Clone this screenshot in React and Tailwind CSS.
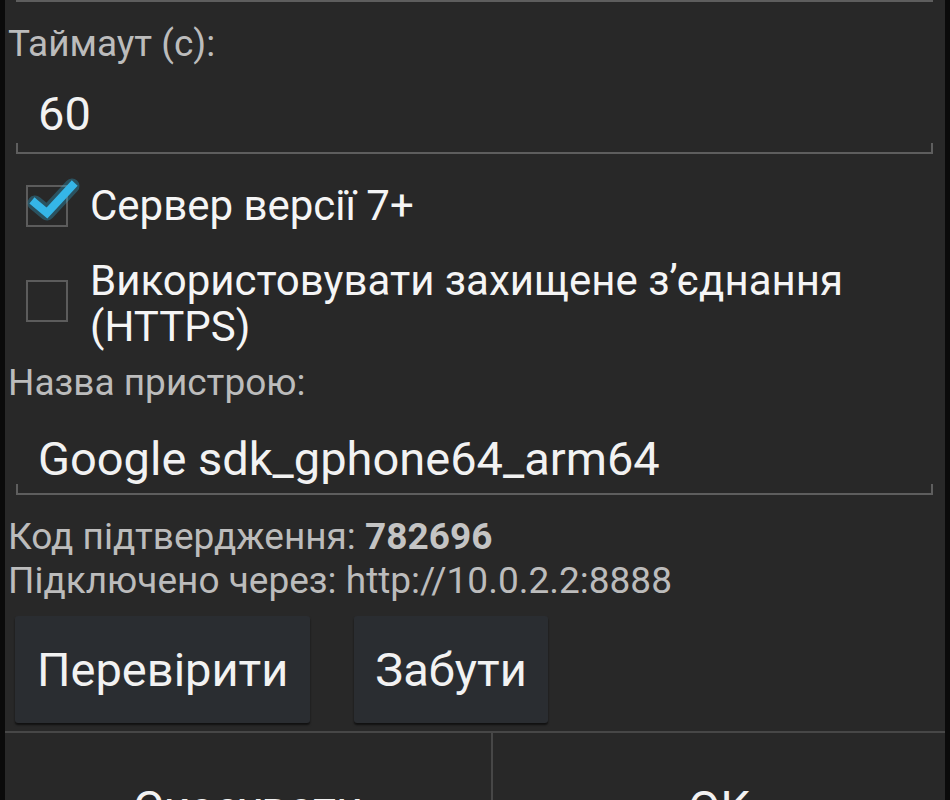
const font = { fontFamily: 'Roboto, "Noto Sans", sans-serif' };

function Check({ checked }) {
  return (
    <svg width="52" height="42" viewBox="0 0 52 42" className="shrink-0 overflow-visible">
      <rect x="1" y="1" width="40" height="40" fill="none" stroke="#5c5c5c" strokeWidth="2" />
      {checked && (
        <>
          <polyline points="9,18 21,28 46,1" fill="none" stroke="#33b5e5" strokeOpacity="0.3" strokeWidth="15" strokeLinejoin="round" strokeLinecap="round" />
          <polyline points="9,18 21,28 46,1" fill="none" stroke="#35b6e8" strokeWidth="8" strokeLinejoin="miter" strokeLinecap="square" />
        </>
      )}
    </svg>
  );
}

export default function App() {
  return (
    <div className="w-[950px] h-[800px] bg-[#0a0a0a] overflow-hidden" style={font}>
      <div className="ml-[5px] w-[940px] h-[800px] bg-[#282828] flex flex-col">
        <div className="ml-[11px] mr-[12px] h-[2px] shrink-0 bg-[#5e5e5e]" />

        {/* timeout */}
        <div className="h-[82px] shrink-0 flex items-center pl-[3px]">
          <span className="text-[37px] text-[#bcbcbc] leading-none">Таймаут (с):</span>
        </div>
        <div className="ml-[11px] mr-[12px] shrink-0 flex flex-col">
          <div className="h-[59px] flex items-center pl-[22px]">
            <span className="text-[47px] text-[#f2f2f2] leading-none">60</span>
          </div>
          <div className="h-[11px] border-x-2 border-b-2 border-[#5e5e5e]" />
        </div>

        {/* checkboxes */}
        <div className="mt-[31px] h-[42px] shrink-0 flex items-center pl-[21px] gap-[12px]">
          <Check checked />
          <span className="text-[42px] text-[#f5f5f5] leading-none">Сервер версії 7+</span>
        </div>
        <div className="mt-[31px] shrink-0 flex items-start pl-[21px] gap-[12px]">
          <div className="mt-[22px]">
            <Check />
          </div>
          <span className="text-[42px] text-[#f5f5f5] leading-[46px]">
            Використовувати захищене з’єднання
            <br />
            (HTTPS)
          </span>
        </div>

        {/* device name */}
        <div className="h-[64px] shrink-0 flex items-center pl-[3px]">
          <span className="text-[37px] text-[#bcbcbc] leading-none">Назва пристрою:</span>
        </div>
        <div className="ml-[11px] mr-[12px] shrink-0 flex flex-col">
          <div className="h-[70px] flex items-center pl-[22px] pt-[18px]">
            <span className="text-[47px] text-[#f2f2f2] leading-none">Google sdk_gphone64_arm64</span>
          </div>
          <div className="h-[11px] border-x-2 border-b-2 border-[#5e5e5e]" />
        </div>

        {/* info */}
        <div className="mt-[20px] shrink-0 pl-[3px] text-[37px] text-[#bcbcbc] leading-[44px]">
          <div>
            Код підтвердження: <span className="font-bold text-[#c4c4c4]">782696</span>
          </div>
          <div>Підключено через: http://10.0.2.2:8888</div>
        </div>

        <div className="mt-[13px] shrink-0 flex gap-[44px] pl-[10px]">
          <button className="h-[107px] px-[22px] bg-[#2a2d31] rounded-[3px] shadow-[0_2px_2px_rgba(0,0,0,0.6)] text-[47px] text-[#f2f2f2] leading-none">
            Перевірити
          </button>
          <button className="h-[107px] px-[21px] bg-[#2a2d31] rounded-[3px] shadow-[0_2px_2px_rgba(0,0,0,0.6)] text-[47px] text-[#f2f2f2] leading-none">
            Забути
          </button>
        </div>

        {/* dialog buttons */}
        <div className="mt-[8px] border-t-2 border-[#474747] flex flex-1">
          <div className="w-[488px] border-r-2 border-[#474747] flex justify-center pt-[51px]">
            <span className="text-[47px] text-[#f2f2f2] leading-none">Скасувати</span>
          </div>
          <div className="flex-1 flex justify-center pt-[51px]">
            <span className="text-[47px] text-[#f2f2f2] leading-none">OK</span>
          </div>
        </div>
      </div>
    </div>
  );
}
